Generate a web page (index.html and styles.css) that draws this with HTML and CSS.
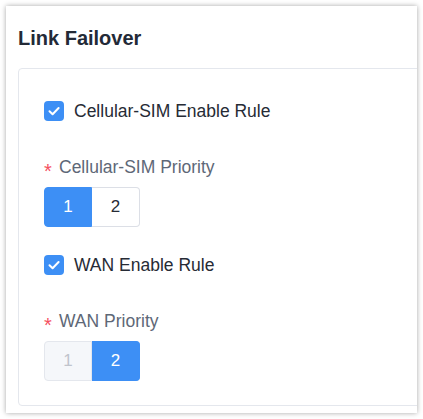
FILE: index.html
```html
<!DOCTYPE html>
<html lang="en">
<head>
<meta charset="utf-8">
<title>Link Failover</title>
<link rel="stylesheet" href="styles.css">
</head>
<body>
<div class="panel">
  <h2 class="title">Link Failover</h2>
  <div class="card">
    <label class="check-row">
      <span class="checkbox"><svg width="20" height="20" viewBox="0 0 20 20"><polyline points="5.5,10.2 8.6,13.2 14.6,7" fill="none" stroke="#fff" stroke-width="2" stroke-linecap="round" stroke-linejoin="round"/></svg></span>
      <span class="check-text">Cellular-SIM Enable Rule</span>
    </label>
    <div class="field-label"><span class="req">*</span>Cellular-SIM Priority</div>
    <div class="seg">
      <span class="seg-btn active">1</span>
      <span class="seg-btn">2</span>
    </div>
    <label class="check-row">
      <span class="checkbox"><svg width="20" height="20" viewBox="0 0 20 20"><polyline points="5.5,10.2 8.6,13.2 14.6,7" fill="none" stroke="#fff" stroke-width="2" stroke-linecap="round" stroke-linejoin="round"/></svg></span>
      <span class="check-text">WAN Enable Rule</span>
    </label>
    <div class="field-label"><span class="req">*</span>WAN Priority</div>
    <div class="seg last">
      <span class="seg-btn disabled">1</span>
      <span class="seg-btn active">2</span>
    </div>
  </div>
</div>
</body>
</html>
```

FILE: styles.css
```css
html, body {
  margin: 0;
  padding: 0;
  background: #ffffff;
}

body {
  font-family: "Liberation Sans", Arial, sans-serif;
}

.panel {
  margin: 6px;
  width: 411px;
  height: 407px;
  box-sizing: border-box;
  padding: 20px 0 7px 12px;
  background: #ffffff;
  box-shadow: 0 0 5px rgba(0, 0, 0, 0.35);
  overflow: hidden;
}

.title {
  margin: 0;
  font-size: 20px;
  line-height: 24px;
  font-weight: 700;
  color: #232a37;
}

.card {
  margin-top: 18px;
  margin-right: -10px;
  border: 1px solid #e4e7ed;
  border-radius: 4px;
  padding: 32px 0 24px 25px;
}

.check-row {
  display: flex;
  align-items: center;
  gap: 10px;
  height: 20px;
  margin-bottom: 34px;
}

.checkbox {
  width: 20px;
  height: 20px;
  border-radius: 4px;
  background: #3d8ff5;
  display: flex;
}

.check-text {
  font-size: 17.5px;
  color: #262b35;
}

.field-label {
  font-size: 17.5px;
  line-height: 24px;
  height: 24px;
  color: #5e6877;
  margin-bottom: 8px;
}

.req {
  display: inline-block;
  width: 15px;
  font-size: 20px;
  line-height: 1;
  color: #f5505f;
  transform: translateY(5px);
}

.seg {
  display: flex;
  margin-bottom: 28px;
}

.seg.last {
  margin-bottom: 0;
}

.seg-btn {
  width: 48px;
  height: 40px;
  box-sizing: border-box;
  display: flex;
  align-items: center;
  justify-content: center;
  font-size: 17px;
  color: #262b35;
  background: #ffffff;
  border: 1px solid #dcdfe6;
}

.seg-btn:first-child {
  border-radius: 4px 0 0 4px;
}

.seg-btn:last-child {
  border-left: none;
  border-radius: 0 4px 4px 0;
}

.seg-btn.active {
  background: #3d8ff5;
  border-color: #3d8ff5;
  color: #ffffff;
}

.seg-btn.disabled {
  background: #f5f7fa;
  border-color: #e4e7ed;
  color: #c0c4cc;
}
```
